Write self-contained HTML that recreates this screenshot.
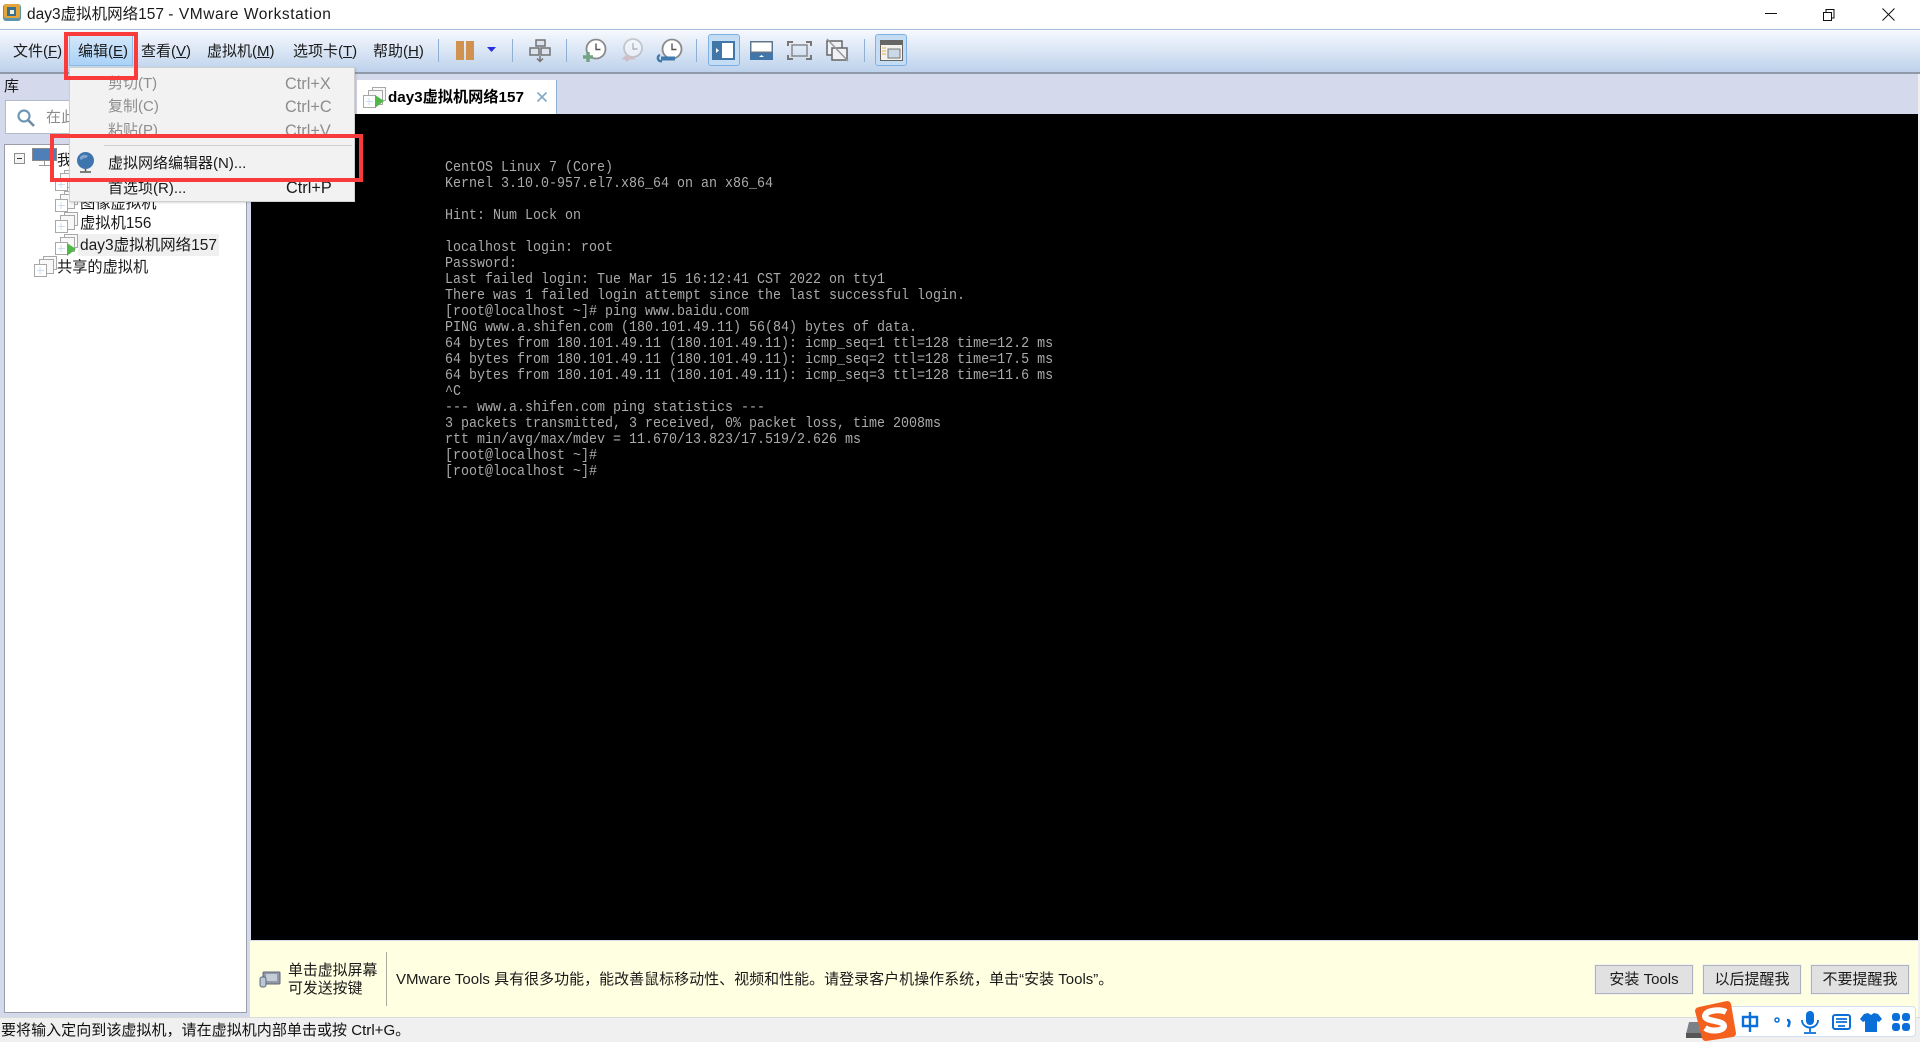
<!DOCTYPE html>
<html lang="zh"><head><meta charset="utf-8"><title>day3虚拟机网络157 - VMware Workstation</title>
<style>
html,body{margin:0;padding:0;width:1920px;height:1042px;overflow:hidden;background:#d4d9ec}
body{position:relative;font-family:"Liberation Sans","Noto Sans CJK SC",sans-serif;font-size:15px;color:#1a1a1a}
.a{position:absolute;white-space:nowrap}
.t{position:absolute;white-space:nowrap;line-height:22px;height:22px}
.sep{position:absolute;width:1px;top:39px;height:23px;background:#8fb0d2}
.m{font-size:15px;top:41px}
.g{color:#8d8d8d}
u{text-decoration:underline;text-underline-offset:1px}
#term{position:absolute;left:444.5px;top:160px;color:#aaa;font:14.5px/16px "Liberation Mono",monospace;white-space:pre;margin:0;transform:scaleX(.9195);transform-origin:0 0}
.btn{position:absolute;top:965px;width:96px;height:27px;border:1px solid #adb2bf;background:#e1e1e1;text-align:center;line-height:27px;font-size:15px;box-shadow:0 0 0 1px #f4f4ea}
svg{position:absolute;overflow:visible}
</style></head><body>
<svg width="0" height="0" style="position:absolute"><defs>
<g id="vm" fill="#fff" stroke="#a8a8a8" stroke-width="1"><rect x="9.5" y=".5" width="13" height="13" fill="#f8f8f8"/><rect x="5.5" y="3.500" width="14" height="14" fill="#f8f8f8"/><rect x=".5" y="8.5" width="12" height="12"/><path d="M6 11v7M3 14.500h7" stroke="#cfdcec"/></g>
<path id="play" d="M0 0l9 6-9 7z" fill="#4fb848"/>
</defs></svg>

<!-- title bar -->
<div class="a" style="left:0;top:0;width:1920px;height:29px;background:#fff"></div>
<svg style="left:3px;top:3px" width="18" height="19" viewBox="0 0 18 19"><rect x="0" y="1" width="18" height="17" rx="3" fill="#5f93a8"/><rect x="1" y="1" width="16" height="14" rx="2" fill="#e4a63b"/><rect x="4" y="4" width="9" height="9" fill="#3b6f8e"/><rect x="7" y="7" width="4" height="4" fill="#f0f0e0"/></svg>
<div class="t" style="left:27px;top:4px;font-size:15.500px">day3虚拟机网络157 <span style="letter-spacing:.55px">- VMware Workstation</span></div>
<svg style="left:1765px;top:8px" width="130" height="14" fill="none" stroke="#111" stroke-width="1"><path d="M0 5.500h12"/><path d="M58.500 4.500h8v8h-8zM61 4V1.500h8V10h-2.500" /><path d="M117.500.5l12 12M129.500.5l-12 12"/></svg>

<!-- toolbar -->
<div class="a" style="left:0;top:29px;width:1920px;height:43px;background:linear-gradient(#f7f9fe,#bdd2ec);border-top:1px solid #a6bfdc;box-sizing:border-box"></div>
<div class="a" style="left:0;top:72px;width:1920px;height:2px;background:#8f99a8"></div>
<div class="a" style="left:69px;top:34px;width:64px;height:32px;background:linear-gradient(#d5e8fb,#a9d2f7);border:1px solid #8cbce8;box-sizing:border-box"></div>
<div class="t m" style="left:13px">文件(<u>F</u>)</div>
<div class="t m" style="left:78px">编辑(<u>E</u>)</div>
<div class="t m" style="left:141px">查看(<u>V</u>)</div>
<div class="t m" style="left:207px">虚拟机(<u>M</u>)</div>
<div class="t m" style="left:293px">选项卡(<u>T</u>)</div>
<div class="t m" style="left:373px">帮助(<u>H</u>)</div>
<div class="sep" style="left:438px"></div>
<div class="a" style="left:456px;top:41px;width:8px;height:19px;background:#d0924e"></div>
<div class="a" style="left:466px;top:41px;width:8px;height:19px;background:#d0924e"></div>
<svg style="left:487px;top:47px" width="10" height="6"><path d="M0 0h9l-4.500 5z" fill="#2a2ee0"/></svg>
<div class="sep" style="left:512px"></div>
<svg style="left:529px;top:39px" width="23" height="24" fill="#dbe3ef" stroke="#727272" stroke-width="1.500"><rect x="7" y="1" width="9" height="6"/><rect x="1" y="9" width="9" height="7"/><rect x="12" y="9" width="9" height="7"/><path d="M11 17v5M8 19.500l3 3 3-3" fill="none"/></svg>
<div class="sep" style="left:566px"></div>
<svg style="left:582px;top:39px" width="26" height="25" fill="none"><circle cx="14" cy="10" r="9.500" fill="#fff" stroke="#8a8a8a" stroke-width="1.800"/><path d="M14 4.500V10.500h4.500" stroke="#555" stroke-width="1.400"/><path d="M6 13v10M1 18h10" stroke="#74a384" stroke-width="3.500"/></svg>
<svg style="left:621px;top:39px" width="24" height="25" fill="none" opacity=".45"><circle cx="12" cy="9" r="9" fill="#fff" stroke="#9a9a9a" stroke-width="1.800"/><path d="M12 4V10h4.500" stroke="#777" stroke-width="1.400"/><path d="M14 19H4l3-3M4 19l3 3" stroke="#c99" stroke-width="3"/></svg>
<svg style="left:658px;top:39px" width="26" height="25" fill="none"><circle cx="14" cy="10" r="9.500" fill="#fff" stroke="#8a8a8a" stroke-width="1.800"/><path d="M14 4.500V10.500h4.500" stroke="#555" stroke-width="1.400"/><path d="M3 19.500h14" stroke="#3f79ad" stroke-width="4"/><path d="M2 16a3 3 0 0 0 2 6" stroke="#3f79ad" stroke-width="2.500"/></svg>
<div class="sep" style="left:696px"></div>
<div class="a" style="left:708px;top:34px;width:32px;height:32px;background:#c5dcf5;border:1px solid #7fb0e4;border-radius:3px;box-sizing:border-box"></div>
<svg style="left:712px;top:41px" width="24" height="20"><rect width="23" height="19" fill="#4275a8"/><rect x="10" y="2" width="11" height="15" fill="#fff"/><path d="M4 7l3 2.500-3 2.500z" fill="#fff"/></svg>
<svg style="left:750px;top:41px" width="24" height="20"><rect width="23" height="19" fill="#4275a8"/><rect x="1" y="1" width="21" height="10" fill="#fff" stroke="#777"/><path d="M9 16l2.500-2 2.500 2z" fill="#fff"/></svg>
<svg style="left:788px;top:41px" width="24" height="20" fill="none" stroke="#777" stroke-width="2"><rect x="4" y="4" width="15" height="11" stroke="#888" stroke-width="1.500"/><path d="M0 5V1h5M23 5V1h-5M0 14v4h5M23 14v4h-5"/></svg>
<svg style="left:826px;top:39px" width="24" height="23" fill="#eef1f6" stroke="#666" stroke-width="1.500"><rect x="1" y="2" width="15" height="14"/><rect x="6" y="9" width="15" height="12"/><path d="M1 0l21 22" stroke="#999"/></svg>
<div class="sep" style="left:864px"></div>
<div class="a" style="left:875px;top:34px;width:32px;height:32px;background:#c5dcf5;border:1px solid #7fb0e4;border-radius:3px;box-sizing:border-box"></div>
<svg style="left:880px;top:40px" width="23" height="22"><rect x=".5" y=".5" width="22" height="20" fill="#f2f2ee" stroke="#666"/><rect width="23" height="5" fill="#666"/><path d="M2 8h4M2 11h4M2 14h4" stroke="#e4b04e"/><rect x="8" y="9" width="12" height="9" fill="#cad8e8" stroke="#777"/></svg>

<!-- left panel -->
<div class="t" style="left:4px;top:76px;font-size:15px">库</div>
<div class="a" style="left:5px;top:100px;width:100px;height:34px;background:#fff;border:1px solid #b4b9c8;box-sizing:border-box"></div>
<svg style="left:17px;top:109px" width="18" height="18" fill="none"><circle cx="7" cy="7" r="5.500" stroke="#6f98b8" stroke-width="2.200"/><path d="M11 11l6 6" stroke="#6f8ba5" stroke-width="2.600"/></svg>
<div class="t g" style="left:46px;top:107px;font-size:15px">在此</div>
<div class="a" style="left:4px;top:144px;width:243px;height:869px;background:#fff;border:1px solid #9a9eaa;box-sizing:border-box"></div>
<svg style="left:14px;top:153px" width="12" height="12"><rect x=".5" y=".5" width="10" height="10" fill="#f4f4f4" stroke="#8e8e8e"/><path d="M3 5.500h5" stroke="#333"/></svg>
<svg style="left:32px;top:148px" width="28" height="20"><rect x=".5" y=".5" width="24" height="12" fill="#4f7fb8" stroke="#8a8a8a"/><path d="M12.500 13v4M7 17.500h11" stroke="#999" fill="none"/></svg>
<div class="t" style="left:57px;top:150px">我</div>
<svg style="left:55px;top:170px" width="24" height="22"><use href="#vm"/></svg>
<svg style="left:55px;top:191px" width="24" height="22"><use href="#vm"/></svg>
<div class="t" style="left:80px;top:193px;font-size:15.3px">图像虚拟机</div>
<svg style="left:55px;top:212px" width="24" height="22"><use href="#vm"/></svg>
<div class="t" style="left:80px;top:213px;font-size:15.3px">虚拟机156</div>
<div class="a" style="left:78px;top:234px;width:141px;height:22px;background:#f0f0f0"></div>
<svg style="left:55px;top:234px" width="24" height="22"><use href="#vm"/><use href="#play" x="12" y="9"/></svg>
<div class="t" style="left:80px;top:235px;font-size:15.5px">day3虚拟机网络157</div>
<svg style="left:34px;top:256px" width="24" height="22"><use href="#vm"/></svg>
<div class="t" style="left:57px;top:257px;font-size:15.2px">共享的虚拟机</div>

<!-- tab -->
<div class="a" style="left:357px;top:80px;width:200px;height:34px;background:#fff;border-right:1px solid #8fb0d2;box-sizing:border-box"></div>
<svg style="left:363px;top:87px" width="24" height="22"><use href="#vm"/><use href="#play" x="12" y="8"/></svg>
<div class="t" style="left:388px;top:87px;font-size:15.2px;font-weight:bold;color:#000">day3虚拟机网络157</div>
<svg style="left:537px;top:92px" width="10" height="10"><path d="M.5.500l9 9M9.500.5l-9 9" stroke="#85a8c4" stroke-width="1.600"/></svg>

<!-- terminal -->
<div class="a" style="left:251px;top:114px;width:1667px;height:826px;background:#000"></div>
<div class="a" style="left:1918px;top:74px;width:2px;height:943px;background:#f0f0f0"></div>
<pre id="term">CentOS Linux 7 (Core)
Kernel 3.10.0-957.el7.x86_64 on an x86_64

Hint: Num Lock on

localhost login: root
Password:
Last failed login: Tue Mar 15 16:12:41 CST 2022 on tty1
There was 1 failed login attempt since the last successful login.
[root@localhost ~]# ping www.baidu.com
PING www.a.shifen.com (180.101.49.11) 56(84) bytes of data.
64 bytes from 180.101.49.11 (180.101.49.11): icmp_seq=1 ttl=128 time=12.2 ms
64 bytes from 180.101.49.11 (180.101.49.11): icmp_seq=2 ttl=128 time=17.5 ms
64 bytes from 180.101.49.11 (180.101.49.11): icmp_seq=3 ttl=128 time=11.6 ms
^C
--- www.a.shifen.com ping statistics ---
3 packets transmitted, 3 received, 0% packet loss, time 2008ms
rtt min/avg/max/mdev = 11.670/13.823/17.519/2.626 ms
[root@localhost ~]#
[root@localhost ~]#</pre>

<!-- hint bar -->
<div class="a" style="left:250px;top:941px;width:1668px;height:76px;background:#ffffe1"></div>
<svg style="left:260px;top:971px" width="21" height="17"><rect x="3" y="1" width="17" height="12" rx="1" fill="#8f9aa8" stroke="#667"/><rect x="6" y="3" width="11" height="7" fill="#c4ccd6"/><rect x="0" y="6" width="6" height="10" rx="2" fill="#b9c6d6" stroke="#5b6b80"/></svg>
<div class="t" style="left:288px;top:960px;font-size:14.900px">单击虚拟屏幕</div>
<div class="t" style="left:288px;top:978px;font-size:14.900px">可发送按键</div>
<div class="a" style="left:386px;top:952px;width:1px;height:54px;background:#a9a9a0"></div>
<div class="t" style="left:396px;top:969px;font-size:15px">VMware Tools 具有很多功能，能改善鼠标移动性、视频和性能。请登录客户机操作系统，单击“安装 Tools”。</div>
<div class="btn" style="left:1595px">安装 Tools</div>
<div class="btn" style="left:1703px">以后提醒我</div>
<div class="btn" style="left:1811px">不要提醒我</div>

<!-- status bar -->
<div class="a" style="left:0;top:1017px;width:1920px;height:25px;background:#f0f0f0;border-top:1px solid #dcdcdc;box-sizing:border-box"></div>
<div class="t" style="left:1px;top:1020px;font-size:15.050px;color:#111">要将输入定向到该虚拟机，请在虚拟机内部单击或按 Ctrl+G。</div>
<svg style="left:1686px;top:1022px" width="20" height="18"><path d="M3 0h12l3 12H0z" fill="#7a8088"/><rect y="11" width="18" height="5" fill="#555"/></svg>

<!-- sogou IME -->
<div class="a" style="left:1715px;top:1006px;width:201px;height:31px;background:#fff;border:1px solid #cfe0f2;border-radius:4px;box-sizing:border-box"></div>
<svg style="left:1694px;top:1000px" width="42" height="42"><path d="M5 7L33 1q3 0 4 3l5 29q0 3-3 4l-27 4q-3 0-4-3L1 11q0-3 4-4z" fill="#f4601e"/><path d="M32 12C26 9 12 10 11 16c0 6 19 4 19 10 0 5-13 6-19 2" fill="none" stroke="#fff" stroke-width="6"/></svg>
<svg style="left:1740px;top:1011px" width="175" height="24" fill="#0a6fd8" stroke="none">
<path d="M3 6h14v9H3zM10 1v20" fill="none" stroke="#0a6fd8" stroke-width="2.400"/>
<circle cx="37" cy="9" r="2" fill="none" stroke="#0a6fd8" stroke-width="1.500"/><path d="M47 9c3 0 3 3 1 7" fill="none" stroke="#0a6fd8" stroke-width="2.600"/>
<rect x="66" y="0" width="8" height="14" rx="4"/><path d="M62 9c0 10 16 10 16 0M70 17v4M64 22h12" fill="none" stroke="#0a6fd8" stroke-width="1.800"/>
<rect x="93" y="4" width="17" height="14" rx="2" fill="none" stroke="#0a6fd8" stroke-width="2"/><path d="M96 8h11M96 11h11M98 15h7" stroke="#0a6fd8" stroke-width="1.800"/>
<path d="M124 3l4-1 3 2 3-2 4 1 4 5-3 3-2-1v11h-12V10l-2 1-3-3z"/>
<rect x="152" y="2" width="8" height="8" rx="3"/><rect x="162" y="2" width="8" height="8" rx="3"/><rect x="152" y="12" width="8" height="8" rx="3"/><rect x="162" y="12" width="8" height="8" rx="3"/>
</svg>

<!-- menu dropdown -->
<div class="a" style="left:69px;top:67px;width:286px;height:135px;background:#f2f2f2;border:1px solid #cfcfcf;box-sizing:border-box;box-shadow:1px 1px 2px rgba(0,0,0,.15)"></div>
<div class="t g" style="left:108px;top:73px;font-size:15px">剪切(T)</div>
<div class="t g" style="left:285px;top:73px;font-size:16.3px">Ctrl+X</div>
<div class="t g" style="left:108px;top:96px;font-size:15px">复制(C)</div>
<div class="t g" style="left:285px;top:96px;font-size:16.3px">Ctrl+C</div>
<div class="t g" style="left:108px;top:120px;font-size:15px">粘贴(P)</div>
<div class="t g" style="left:285px;top:120px;font-size:16.3px">Ctrl+V</div>
<div class="a" style="left:104px;top:145px;width:248px;height:1px;background:#d0d0d0"></div>
<svg style="left:77px;top:152px" width="18" height="21"><circle cx="8.500" cy="8.500" r="8.500" fill="#3f75ae"/><path d="M3 5q4-4 8-1-2 3-5 2-1 3-3 1z" fill="#7fa6cf"/><path d="M8.500 17v2M3 20h11" stroke="#555" stroke-width="1.500"/></svg>
<div class="t" style="left:108px;top:153px;font-size:15px">虚拟网络编辑器(N)...</div>
<div class="t" style="left:108px;top:178px;font-size:15px">首选项(R)...</div>
<div class="t" style="left:286px;top:177px;font-size:16.3px">Ctrl+P</div>

<!-- red annotation boxes -->
<div class="a" style="left:64px;top:32px;width:74px;height:48px;border:4px solid #f93b3b;box-sizing:border-box"></div>
<div class="a" style="left:50px;top:134px;width:313px;height:48px;border:4px solid #f93b3b;box-sizing:border-box"></div>
</body></html>
